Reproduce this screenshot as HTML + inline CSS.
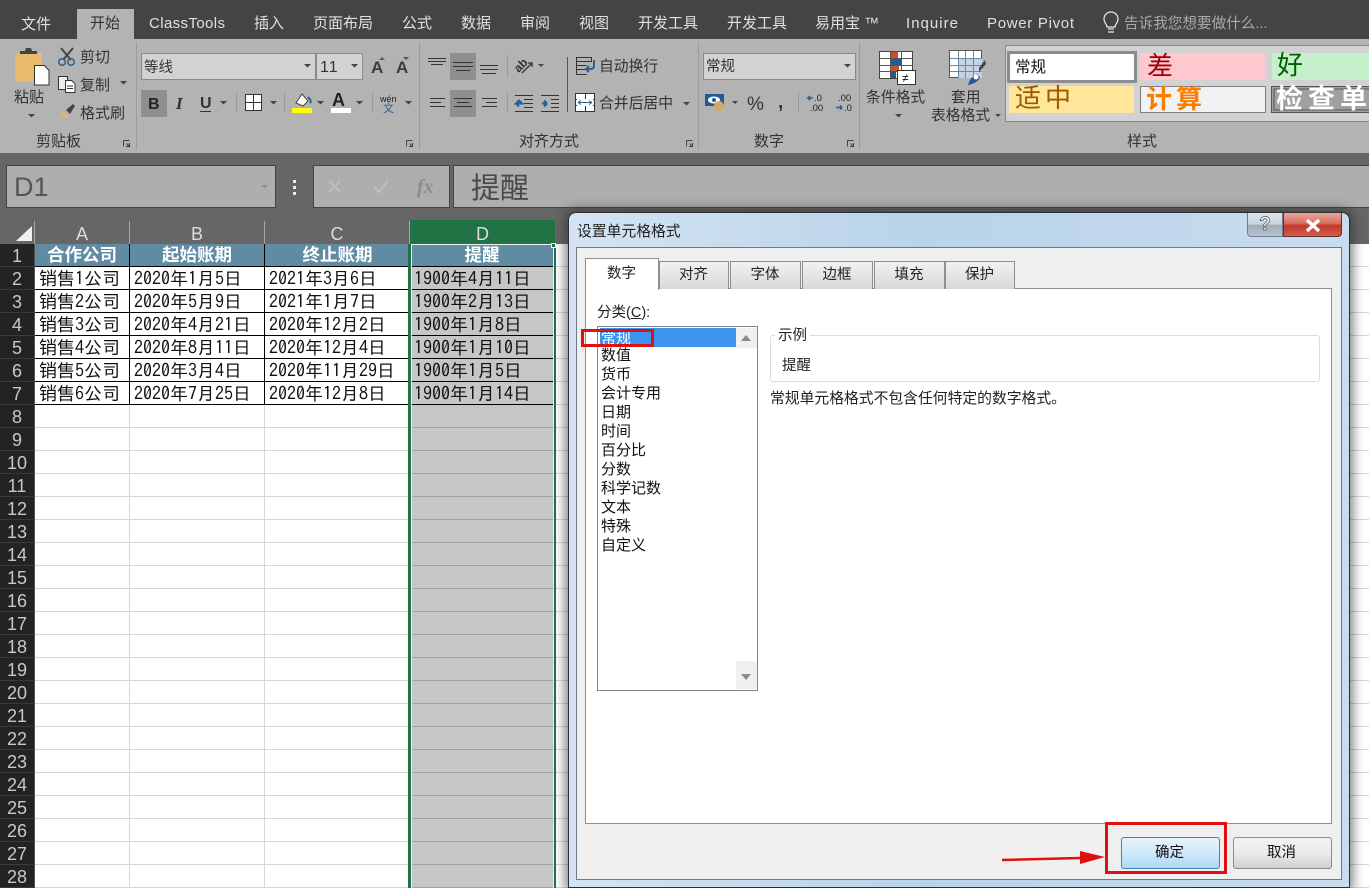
<!DOCTYPE html>
<html lang="zh"><head><meta charset="utf-8"><title>设置单元格格式</title>
<style>
*{box-sizing:border-box}
html,body{margin:0;padding:0;width:1369px;height:888px;overflow:hidden;background:#fff}
body{position:relative;font-family:"Liberation Sans","Noto Sans CJK SC",sans-serif}
.abs{position:absolute}
svg{position:absolute;left:0;top:0;overflow:visible}
svg text{font-family:"Liberation Sans","Noto Sans CJK SC",sans-serif;font-size:15px;fill:#333}
.tab{fill:#e0e0e0}
#rows div{position:absolute;left:0;width:34px;height:23px;line-height:25px;text-align:center;color:#c8c8c8;font-size:18px;background:#232323;border-bottom:1px solid #3a3a3a}
#cols div{position:absolute;top:221px;height:23px;line-height:26px;text-align:center;color:#dcdcdc;font-size:18px;border-right:1px solid #a5a5a5}
table{position:absolute;left:35px;top:244px;border-collapse:separate;border-spacing:0;table-layout:fixed;width:518px;font-family:"IPAGothic","Noto Sans CJK SC",sans-serif;font-size:18px;color:#111}
td{height:23px;padding:3px 0 0 4px;line-height:19px;border-right:1px solid #000;border-bottom:1px solid #000;white-space:nowrap;overflow:hidden;background:#fff}
tr:first-child td{background:#5f8ba3;color:#fff;text-align:center;padding:0;font-family:"Noto Sans CJK SC",sans-serif;font-weight:700;font-size:17.5px;line-height:22px}
td.d{background:#c6c6c6;border-right:none;padding-left:3px}
tr:first-child td.d{background:#5f8ba3}
#dlg{position:absolute;left:568px;top:212px;width:782px;height:676px;border:1px solid #2e2e2e;border-radius:8px 8px 0 0;background:linear-gradient(90deg,#d4e4f2 0,#b9d3e9 45%,#c8dcee 100%);box-shadow:0 0 11px 3px rgba(40,40,40,.6)}
#dlg div{position:absolute}
#inner{left:7px;top:34px;width:766px;height:633px;background:#efefef;border:1px solid #6d7a87}
.dt{top:48px;height:28px;line-height:26px;text-align:center;font-size:14.5px;color:#222;background:linear-gradient(#f1f1f1,#d9d9d9);border:1px solid #8f8f8f;border-bottom:none;padding-right:1px}
.li{left:32px;width:130px;height:19px;line-height:19px;font-size:15px;color:#111;white-space:nowrap}
.btn{width:99px;height:32px;border-radius:3px;text-align:center;line-height:30px;font-size:14.5px;color:#111;padding-right:2px}
</style></head>
<body>
<div class="abs" style="left:0;top:0;width:1369px;height:39px;background:#444"></div>
<div class="abs" style="left:77px;top:9px;width:57px;height:30px;background:#b3b3b3"></div>
<div class="abs" style="left:0;top:39px;width:1369px;height:114px;background:#b3b3b3"></div>
<div class="abs" style="left:0;top:153px;width:1369px;height:91px;background:#666"></div>

<svg width="1369" height="245" viewBox="0 0 1369 245">
<!-- tabs -->
<text class="tab" x="21" y="29">文件</text>
<text x="90" y="28" fill="#333">开始</text>
<text class="tab" x="149" y="28" textLength="76">ClassTools</text>
<text class="tab" x="254" y="28">插入</text>
<text class="tab" x="313" y="28">页面布局</text>
<text class="tab" x="402" y="28">公式</text>
<text class="tab" x="461" y="28">数据</text>
<text class="tab" x="520" y="28">审阅</text>
<text class="tab" x="579" y="28">视图</text>
<text class="tab" x="638" y="28">开发工具</text>
<text class="tab" x="727" y="28">开发工具</text>
<text class="tab" x="815" y="28">易用宝 ™</text>
<text class="tab" x="906" y="28" textLength="52">Inquire</text>
<text class="tab" x="987" y="28" textLength="87">Power Pivot</text>
<path d="M1108 29h6M1108 32h6M1107 27c0-3-3-4-3-8a7 7 0 0 1 14 0c0 4-3 5-3 8z" fill="none" stroke="#e6e6e6" stroke-width="1.2"/>
<text x="1124" y="28" style="fill:#a8a8a8;font-size:14.6px">告诉我您想要做什么...</text>

<!-- separators -->
<g stroke="#9c9c9c"><path d="M136.500 42v108M419.500 42v108M698.500 42v108M859.500 42v108"/></g>
<g stroke="#9a9a9a"><path d="M236.500 92v20M284.500 92v20M372.500 92v20M507.500 55v22M507.500 92v20M798.500 92v20"/></g>
<path d="M567.500 57v55" stroke="#555"/>

<!-- clipboard -->
<rect x="15" y="53" width="27" height="29" rx="1" fill="#e8bb6c"/>
<path d="M20 54v-3h5l1-3h5l1 3h5v3z" fill="#444"/>
<path d="M34.500 65.500h10l4.500 5v14.500h-14.500z" fill="#fff" stroke="#333"/>
<text x="14" y="102" style="font-size:15px">粘贴</text>
<path d="M28 114h7l-3.500 3.500z M120 81h7l-3.500 3.500z" fill="#444"/>
<!-- scissors -->
<path d="M61 48l10 12M73 48l-10 12" stroke="#444" stroke-width="2" fill="none"/>
<circle cx="62" cy="62" r="3.300" fill="none" stroke="#2f5f8f" stroke-width="1.500"/><circle cx="71" cy="62" r="3.300" fill="none" stroke="#2f5f8f" stroke-width="1.500"/>
<text x="80" y="62">剪切</text>
<!-- copy -->
<path d="M58.500 76.500h9v13h-9z" fill="#eee" stroke="#333"/><path d="M65.500 80.500h6l3.500 3v9h-9.500z" fill="#fff" stroke="#333"/><path d="M67 86h6M67 88.500h6" stroke="#333"/>
<text x="80" y="90">复制</text>
<!-- brush -->
<path d="M60 111l6 3 3 5-6-2z" fill="#e3b567"/><path d="M66 110l7-6 2 2-5 8z" fill="#444"/>
<text x="80" y="118">格式刷</text>
<text x="36" y="146">剪贴板</text>
<g fill="none" stroke="#444"><path d="M123.500 140.500h6M123.500 140.500v6"/><path d="M129.500 146.500l-3-3M126 146.500h3.500v-3.500" stroke-width="1.200"/>
<path d="M406.500 140.500h6M406.500 140.500v6M412.500 146.500l-3-3M409 146.500h3.500v-3.500"/>
<path d="M686.500 140.500h6M686.500 140.500v6M692.500 146.500l-3-3M689 146.500h3.500v-3.500"/>
<path d="M847.500 140.500h6M847.500 140.500v6M853.500 146.500l-3-3M850 146.500h3.500v-3.500"/></g>

<!-- font -->
<rect x="141.500" y="53.500" width="174" height="26" fill="#d2d2d2" stroke="#8a8a8a"/>
<rect x="316.500" y="53.500" width="46" height="26" fill="#d2d2d2" stroke="#8a8a8a"/>
<rect x="703.500" y="53.500" width="152" height="26" fill="#d2d2d2" stroke="#8a8a8a"/>
<text x="144" y="72" style="font-size:14.5px">等线</text>
<text x="320" y="72" style="font-size:16px;letter-spacing:1px">11</text>
<path d="M304 64h7l-3.500 3.500zM351 64h7l-3.500 3.500zM220 101h7l-3.500 3.500zM270 101h7l-3.500 3.500zM317 101h7l-3.500 3.500zM356 101h7l-3.500 3.500zM405 101h7l-3.500 3.500zM538 64h6l-3 3zM683 102h7l-3.500 3.500zM844 64h7l-3.500 3.500zM732 101h6l-3 3zM895 114h7l-3.500 3.500zM995 114h6l-3 3z" fill="#444"/>
<text x="371" y="73" style="font-size:17px;font-weight:700;fill:#3c3c3c">A</text>
<text x="396" y="73" style="font-size:17px;font-weight:700;fill:#3c3c3c">A</text>
<path d="M379 60l3-3 3 3zM403 57h6l-3 3z" fill="#2f5f8f"/>
<rect x="141" y="90" width="26" height="27" fill="#8f8f8f"/>
<text x="148" y="109" style="font-size:16px;font-weight:700;fill:#222">B</text>
<text x="176" y="109" style="font-family:'Liberation Serif',serif;font-size:17px;font-weight:700;font-style:italic;fill:#333">I</text>
<text x="200" y="108" style="font-size:16px;font-weight:700;fill:#333">U</text>
<path d="M200 111.500h11" stroke="#333"/>
<rect x="245.500" y="94.500" width="16" height="16" fill="#fff" stroke="#333"/><path d="M253.500 94v17M245 102.500h17" stroke="#333"/>
<path d="M296 103l6-9 6 7-5 5z" fill="#fff" stroke="#444"/><path d="M308 97q4 4 2 6" stroke="#2f5f8f" stroke-width="2" fill="none"/>
<rect x="292" y="108" width="20" height="5" fill="#ffff00"/>
<text x="332" y="106" style="font-size:18px;font-weight:700;fill:#222">A</text>
<rect x="331" y="108" width="20" height="5" fill="#fff"/>
<text x="380" y="102" style="font-size:9px;fill:#222">wén</text>
<text x="383" y="112" style="font-size:11px;fill:#2f5f8f">文</text>

<!-- alignment -->
<rect x="450" y="53" width="26" height="27" fill="#8f8f8f"/><rect x="450" y="90" width="26" height="27" fill="#8f8f8f"/>
<g stroke="#333" fill="none">
<path d="M428 58.500h18M428 61.500h18M431 64.500h12"/>
<path d="M453 62.500h20M453 66.500h20M456 70.500h14"/>
<path d="M480 65.500h18M480 69.500h18M482 73.500h14"/>
<path d="M430 98.500h15M430 102.500h11M430 106.500h15"/>
<path d="M454 98.500h18M457 102.500h12M454 106.500h18"/>
<path d="M482 98.500h15M486 102.500h11M482 106.500h15"/>
<path d="M522 73l10-10M532 67v-4h-4" stroke-width="1.300"/>
<path d="M515 95.500h18M524 99.500h9M524 103.500h9M524 107.500h9M515 111.500h18M541 95.500h18M551 99.500h8M551 103.500h8M551 107.500h8M541 111.500h18"/>
<path d="M576.500 57.500h15v4h-15zM576.500 65.500h10M576.500 69.500h10M576.500 74.500h10M576.500 61.500v13" />
<rect x="575.500" y="93.500" width="19" height="18" fill="#fff"/><path d="M575.500 99.500h19M575.500 105.500h19M585.500 93.500v6M585.500 105.500v6"/>
</g>
<text x="514" y="70" transform="rotate(-45 520 66)" style="font-size:12px;font-weight:700;fill:#333">ab</text>
<path d="M522 103.500l-6 0 3-3zM516 103.500l3 3M547 103.500h-5M547 103.500l-3-3M547 103.500l-3 3" stroke="#1f5f9f" stroke-width="2" fill="none"/>
<path d="M594 60v6q0 3-4 3h-3M589 66l-3 3 3 3" stroke="#2f5f8f" stroke-width="2" fill="none"/>
<rect x="577" y="99" width="16" height="7" fill="#fff"/><path d="M578 102.500h14M578 102.500l3-2M578 102.500l3 2M592 102.500l-3-2M592 102.500l-3 2" stroke="#2f5f8f"/>
<text x="599" y="71" style="font-size:14.8px">自动换行</text>
<text x="599" y="108" style="font-size:14.8px">合并后居中</text>
<text x="519" y="146">对齐方式</text>

<!-- number -->
<text x="706" y="71" style="font-size:14.5px">常规</text>
<rect x="705" y="94" width="19" height="12" fill="#235a92"/><ellipse cx="714" cy="100" rx="6" ry="3.500" fill="#fff"/><circle cx="714" cy="100" r="2" fill="#235a92"/><circle cx="719" cy="106" r="5" fill="#d6a868"/>
<text x="747" y="110" style="font-size:19px;fill:#333">%</text>
<text x="778" y="108" style="font-size:19px;font-weight:700;fill:#333">,</text>
<text x="814" y="101" style="font-size:9.500px;fill:#222">.0</text><text x="810" y="111" style="font-size:9.500px;fill:#222">.00</text>
<text x="838" y="101" style="font-size:9.500px;fill:#222">.00</text><text x="844" y="111" style="font-size:9.500px;fill:#222">.0</text>
<path d="M813 98h-5l2-2M808 98l2 2M836 107.500h6M842 107.500l-2-2M842 107.500l-2 2" stroke="#2f5f8f" stroke-width="1.600" fill="none"/>
<text x="754" y="146">数字</text>

<!-- cond formatting -->
<rect x="879.500" y="51.500" width="33" height="27" fill="#fff" stroke="#444"/>
<rect x="890" y="52" width="8" height="6" fill="#c8502b"/><rect x="890" y="58" width="11" height="7" fill="#235a92"/><rect x="890" y="65" width="9" height="6" fill="#c8502b"/><rect x="890" y="71" width="6" height="7" fill="#235a92"/>
<path d="M890.500 51v27M901.500 51v27M879 58.500h33M879 65.500h33M879 71.500h33" stroke="#555" fill="none"/>
<rect x="897.500" y="70.500" width="18" height="14" fill="#fff" stroke="#333"/><text x="902" y="82" style="font-size:12px;fill:#111">≠</text>
<text x="866" y="102" style="font-size:14.8px">条件格式</text>
<!-- table format -->
<rect x="949.500" y="50.500" width="32" height="27" fill="#fff" stroke="#555"/><rect x="958" y="58" width="24" height="20" fill="#c3d3e3"/>
<path d="M958.500 51v27M965.500 51v27M973.500 51v27M950 58.500h32M950 65.500h32M950 71.500h32" stroke="#6a8aa8" fill="none"/>
<path d="M979 68l6-8 1 4-7 8z" fill="#444"/><path d="M968 85q2-8 9-11l3 3q-2 6-12 8z" fill="#235a92"/><circle cx="976" cy="77" r="2.500" fill="#fff"/>
<text x="951" y="102" style="font-size:14.8px">套用</text>
<text x="931" y="120" style="font-size:14.8px">表格格式</text>

<!-- styles -->
<rect x="1005.500" y="45.500" width="370" height="76" fill="#d2d2d2" stroke="#888"/>
<rect x="1008.500" y="52.500" width="127" height="29" fill="#fff" stroke="#8c8c8c" stroke-width="3"/>
<text x="1015" y="72" style="font-size:15.500px;fill:#111">常规</text>
<rect x="1140" y="53" width="125" height="27" fill="#ffc7ce"/><text x="1147" y="75" style="font-size:26px;fill:#9c0006">差</text>
<rect x="1272" y="53" width="100" height="27" fill="#c6efce"/><text x="1277" y="74" style="font-size:26px;fill:#006100">好</text>
<rect x="1009" y="86" width="125" height="27" fill="#ffe699"/><text x="1015" y="107" style="font-size:26px;letter-spacing:4px;fill:#9c5700">适中</text>
<rect x="1140.500" y="86.500" width="125" height="26" fill="#f2f2f2" stroke="#7f7f7f"/><text x="1146" y="108" style="font-size:26px;font-weight:700;letter-spacing:4px;fill:#fa7d00">计算</text>
<rect x="1271.500" y="86.500" width="100" height="26" fill="#a0a0a0" stroke="#555"/><rect x="1274" y="89" width="100" height="21" fill="none" stroke="#555"/><text x="1276" y="108" style="font-size:27px;font-weight:700;letter-spacing:5px;fill:#fff">检查单元格</text>
<text x="1127" y="146">样式</text>

<!-- formula bar -->
<rect x="6.500" y="165.500" width="269" height="42" fill="#aeaeae" stroke="#444"/>
<text x="14" y="196" style="font-size:27px;fill:#555">D1</text>
<path d="M261 185h7l-3.500 3.500z" fill="#909090"/>
<g fill="#eee"><rect x="293" y="180" width="3" height="3"/><rect x="293" y="186" width="3" height="3"/><rect x="293" y="192" width="3" height="3"/></g>
<rect x="313.500" y="165.500" width="136" height="42" fill="#aeaeae" stroke="#444"/>
<rect x="453.500" y="165.500" width="920" height="42" fill="#aeaeae" stroke="#444"/>
<path d="M329 181l11 11M340 181l-11 11" stroke="#bdbdbd" stroke-width="2.500"/>
<path d="M374 187l5 5 9-11" stroke="#bdbdbd" stroke-width="2.500" fill="none"/>
<text x="417" y="193" style="font-family:'Liberation Serif',serif;font-size:20px;font-style:italic;font-weight:700;fill:#8c8c8c">fx</text>
<text x="471" y="198" style="font-size:29px;fill:#4a4a4a">提醒</text>
</svg>

<!-- grid -->
<div class="abs" style="left:35px;top:244px;width:1334px;height:644px;background:repeating-linear-gradient(180deg,#fff 0,#fff 22px,#d6d6d6 22px,#d6d6d6 23px)"></div>
<div class="abs" style="left:129px;top:244px;width:1px;height:644px;background:#d6d6d6"></div>
<div class="abs" style="left:264px;top:244px;width:1px;height:644px;background:#d6d6d6"></div>
<div class="abs" style="left:411px;top:244px;width:143px;height:644px;background:repeating-linear-gradient(180deg,#c6c6c6 0,#c6c6c6 22px,#a2a2a2 22px,#a2a2a2 23px)"></div>

<!-- column headers -->
<div id="cols">
<div style="left:0;width:35px"></div>
<div style="left:35px;width:95px">A</div>
<div style="left:130px;width:135px">B</div>
<div style="left:265px;width:145px">C</div>
<div style="left:410px;width:145px;background:#217346;border:none;top:220px;height:24px;line-height:28px">D</div>
</div>
<svg width="40" height="245"><path d="M32 226v15H16z" fill="#f0f0f0"/></svg>

<!-- rows -->
<div id="rows">
<div style="top:244px">1</div><div style="top:267px">2</div><div style="top:290px">3</div><div style="top:313px">4</div>
<div style="top:336px">5</div><div style="top:359px">6</div><div style="top:382px">7</div><div style="top:405px">8</div>
<div style="top:428px">9</div><div style="top:451px">10</div><div style="top:474px">11</div><div style="top:497px">12</div>
<div style="top:520px">13</div><div style="top:543px">14</div><div style="top:566px">15</div><div style="top:589px">16</div>
<div style="top:612px">17</div><div style="top:635px">18</div><div style="top:658px">19</div><div style="top:681px">20</div>
<div style="top:704px">21</div><div style="top:727px">22</div><div style="top:750px">23</div><div style="top:773px">24</div>
<div style="top:796px">25</div><div style="top:819px">26</div><div style="top:842px">27</div><div style="top:865px">28</div>
</div>
<div class="abs" style="left:34px;top:244px;width:1px;height:644px;background:#555"></div>

<table>
<colgroup><col style="width:95px"><col style="width:135px"><col style="width:146px"><col style="width:142px"></colgroup>
<tr><td>合作公司</td><td>起始账期</td><td>终止账期</td><td class="d">提醒</td></tr>
<tr><td>销售1公司</td><td>2020年1月5日</td><td>2021年3月6日</td><td class="d">1900年4月11日</td></tr>
<tr><td>销售2公司</td><td>2020年5月9日</td><td>2021年1月7日</td><td class="d">1900年2月13日</td></tr>
<tr><td>销售3公司</td><td>2020年4月21日</td><td>2020年12月2日</td><td class="d">1900年1月8日</td></tr>
<tr><td>销售4公司</td><td>2020年8月11日</td><td>2020年12月4日</td><td class="d">1900年1月10日</td></tr>
<tr><td>销售5公司</td><td>2020年3月4日</td><td>2020年11月29日</td><td class="d">1900年1月5日</td></tr>
<tr><td>销售6公司</td><td>2020年7月25日</td><td>2020年12月8日</td><td class="d">1900年1月14日</td></tr>
</table>

<!-- selection -->
<div class="abs" style="left:408px;top:244px;width:3px;height:644px;background:#217346"></div>
<div class="abs" style="left:411px;top:244px;width:1px;height:644px;background:#f0f0f0"></div>
<div class="abs" style="left:553px;top:244px;width:1px;height:644px;background:#f0f0f0"></div>
<div class="abs" style="left:554px;top:244px;width:2px;height:644px;background:#217346"></div>
<div class="abs" style="left:411px;top:244px;width:143px;height:1px;background:#f0f0f0"></div>
<div class="abs" style="left:551px;top:243px;width:5px;height:5px;background:#217346;border:1px solid #fff"></div>

<!-- dialog -->
<div id="dlg">
<div style="left:8px;top:7px;font-size:14.800px;color:#222;white-space:nowrap">设置单元格格式</div>
<div style="left:678px;top:0;width:36px;height:24px;border:1px solid #6f7f8f;border-top:none;border-radius:0 0 0 4px;background:linear-gradient(#dbe6ef,#c5d2dd 50%,#9fadb9 52%,#b4c2cd);text-align:center;color:#f5f5f5;font-weight:700;font-size:19px;line-height:24px;-webkit-text-stroke:.7px #555">?</div>
<div style="left:714px;top:0;width:59px;height:24px;border:1px solid #5f3030;border-top:none;border-radius:0 0 4px 0;background:linear-gradient(#e9a79c,#d8705f 45%,#c0392b 55%,#d45c4c)"></div>
<svg width="782" height="40"><path d="M738 7l12 11M750 7l-12 11" stroke="#fff" stroke-width="3.500" fill="none"/></svg>
<div id="inner"></div>
<div style="left:16px;top:75px;width:747px;height:536px;background:#fff;border:1px solid #8f8f8f"></div>
<div class="dt" style="left:16px;top:45px;width:74px;height:32px;background:#fff;line-height:31px">数字</div>
<div class="dt" style="left:90px;width:70px">对齐</div>
<div class="dt" style="left:161px;width:71px">字体</div>
<div class="dt" style="left:233px;width:71px">边框</div>
<div class="dt" style="left:305px;width:71px">填充</div>
<div class="dt" style="left:376px;width:70px">保护</div>
<div style="left:28px;top:88px;font-size:14.500px;color:#222;white-space:nowrap">分类(<u>C</u>):</div>
<div style="left:28px;top:113px;width:161px;height:365px;background:#fff;border:1px solid #828790"></div>
<div style="left:167px;top:115px;width:21px;height:20px;background:#f0f0f0"></div>
<div style="left:167px;top:448px;width:21px;height:28px;background:#f0f0f0"></div>
<div style="left:172px;top:122px;width:0;height:0;border:5px solid transparent;border-top:none;border-bottom:6px solid #8a8a8a"></div>
<div style="left:172px;top:461px;width:0;height:0;border:5px solid transparent;border-bottom:none;border-top:6px solid #8a8a8a"></div>
<div style="left:31px;top:115px;width:136px;height:19px;background:#3d93f0"></div>
<div class="li" style="top:116px;color:#fff">常规</div>
<div class="li" style="top:133px">数值</div>
<div class="li" style="top:152px">货币</div>
<div class="li" style="top:171px">会计专用</div>
<div class="li" style="top:190px">日期</div>
<div class="li" style="top:209px">时间</div>
<div class="li" style="top:228px">百分比</div>
<div class="li" style="top:247px">分数</div>
<div class="li" style="top:266px">科学记数</div>
<div class="li" style="top:285px">文本</div>
<div class="li" style="top:304px">特殊</div>
<div class="li" style="top:323px">自定义</div>
<div style="left:12px;top:116px;width:73px;height:18px;border:3px solid #e01010"></div>
<div style="left:201px;top:122px;width:550px;height:47px;border:1px solid #dcdcdc;border-radius:3px"></div>
<div style="left:206px;top:111px;padding:0 3px;background:#fff;font-size:14.500px;color:#222">示例</div>
<div style="left:213px;top:141px;font-size:14.500px;color:#222;white-space:nowrap">提醒</div>
<div style="left:201px;top:174px;font-size:14.800px;color:#222;white-space:nowrap">常规单元格格式不包含任何特定的数字格式。</div>
<div class="btn" style="left:552px;top:624px;border:1px solid #4f7fa8;background:linear-gradient(#e8f4fc,#d0e9f9 50%,#a9d9f5)">确定</div>
<div class="btn" style="left:664px;top:624px;border:1px solid #8a8a8a;background:linear-gradient(#f2f2f2,#ebebeb 50%,#cfcfcf)">取消</div>
<div style="left:536px;top:609px;width:122px;height:52px;border:3px solid #e01010"></div>
</div>
<svg width="1369" height="888"><path d="M1002 860l78-2" stroke="#e01010" stroke-width="2.500"/><path d="M1080 851l25 6-25 7z" fill="#e01010"/></svg>
</body></html>
